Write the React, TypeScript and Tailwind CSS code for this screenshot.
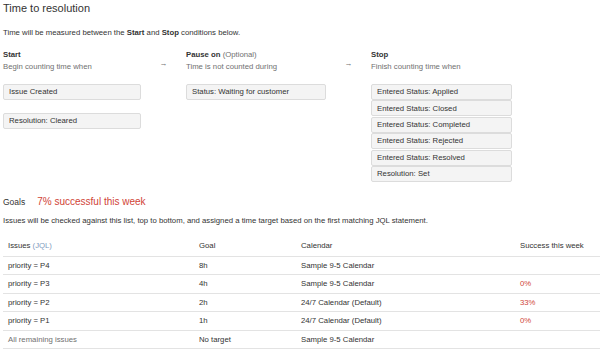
import type { ReactNode } from 'react';

type Goal = {
  jql: string;
  goal: string;
  calendar: string;
  success?: string;
  muted?: boolean;
};

const goals: Goal[] = [
  { jql: 'priority = P4', goal: '8h', calendar: 'Sample 9-5 Calendar' },
  { jql: 'priority = P3', goal: '4h', calendar: 'Sample 9-5 Calendar', success: '0%' },
  { jql: 'priority = P2', goal: '2h', calendar: '24/7 Calendar (Default)', success: '33%' },
  { jql: 'priority = P1', goal: '1h', calendar: '24/7 Calendar (Default)', success: '0%' },
  { jql: 'All remaining issues', goal: 'No target', calendar: 'Sample 9-5 Calendar', muted: true },
];

const stopConditions = [
  'Entered Status: Applied',
  'Entered Status: Closed',
  'Entered Status: Completed',
  'Entered Status: Rejected',
  'Entered Status: Resolved',
  'Resolution: Set',
];

function Condition({ children }: { children: ReactNode }) {
  return (
    <div className="flex h-[16px] items-center rounded-[2px] border border-[#dcdcdc] bg-[#f4f4f4] pl-[5px] text-[#333]">
      {children}
    </div>
  );
}

function Arrow() {
  return (
    <div className="w-[45px] shrink-0 pt-[9px] text-center leading-[12px] text-[#707070]">→</div>
  );
}

export default function App() {
  return (
    <div
      className="min-h-[350px] w-[600px] bg-white pl-[3px] text-[7.75px] text-[#333]"
      style={{ fontFamily: '"Liberation Sans", Arial, sans-serif' }}
    >
      <h1 className="pt-[1px] text-[11px] font-normal leading-[14px]">Time to resolution</h1>
      <p className="mt-[12px] leading-[12px]">
        Time will be measured between the <b>Start</b> and <b>Stop</b> conditions below.
      </p>

      <div className="mt-[10px] flex">
        <div className="w-[138px] shrink-0">
          <div className="font-bold leading-[12px]">Start</div>
          <div className="leading-[12px] text-[#707070]">Begin counting time when</div>
          <div className="mt-[11px] flex flex-col gap-[12.5px]">
            <Condition>Issue Created</Condition>
            <Condition>Resolution: Cleared</Condition>
          </div>
        </div>
        <Arrow />
        <div className="w-[140px] shrink-0">
          <div className="leading-[12px]">
            <b>Pause on</b> <span className="text-[#707070]">(Optional)</span>
          </div>
          <div className="leading-[12px] text-[#707070]">Time is not counted during</div>
          <div className="mt-[11px]">
            <Condition>Status: Waiting for customer</Condition>
          </div>
        </div>
        <Arrow />
        <div className="w-[141px] shrink-0">
          <div className="font-bold leading-[12px]">Stop</div>
          <div className="leading-[12px] text-[#707070]">Finish counting time when</div>
          <div className="mt-[11px] flex flex-col gap-[0.4px]">
            {stopConditions.map((c) => (
              <Condition key={c}>{c}</Condition>
            ))}
          </div>
        </div>
      </div>

      <div className="mt-[14.5px] flex items-baseline leading-[12px]">
        <span className="text-[8.5px]">Goals</span>
        <span className="ml-[12px] text-[10px] text-[#d04437]">7% successful this week</span>
      </div>
      <p className="mt-[7px] leading-[12px]">
        Issues will be checked against this list, top to bottom, and assigned a time target based on the
        first matching JQL statement.
      </p>

      <table className="mt-[8px] w-[597px] border-collapse text-left">
        <thead>
          <tr className="h-[21px] border-b border-[#e3e3e3]">
            <th className="w-[191px] pl-[5px] font-normal">
              Issues <span className="text-[#7f9cc0]">(JQL)</span>
            </th>
            <th className="w-[102px] pl-[5px] font-normal">Goal</th>
            <th className="w-[219px] pl-[5px] font-normal">Calendar</th>
            <th className="pl-[5px] font-normal">Success this week</th>
          </tr>
        </thead>
        <tbody>
          {goals.map((g) => (
            <tr key={g.jql} className="h-[18.5px] border-b border-[#e3e3e3]">
              <td className={`pl-[5px] ${g.muted ? 'text-[#707070]' : ''}`}>{g.jql}</td>
              <td className="pl-[5px]">{g.goal}</td>
              <td className="pl-[5px]">{g.calendar}</td>
              <td className="pl-[5px] text-[#d04437]">{g.success ?? ''}</td>
            </tr>
          ))}
        </tbody>
      </table>
    </div>
  );
}
